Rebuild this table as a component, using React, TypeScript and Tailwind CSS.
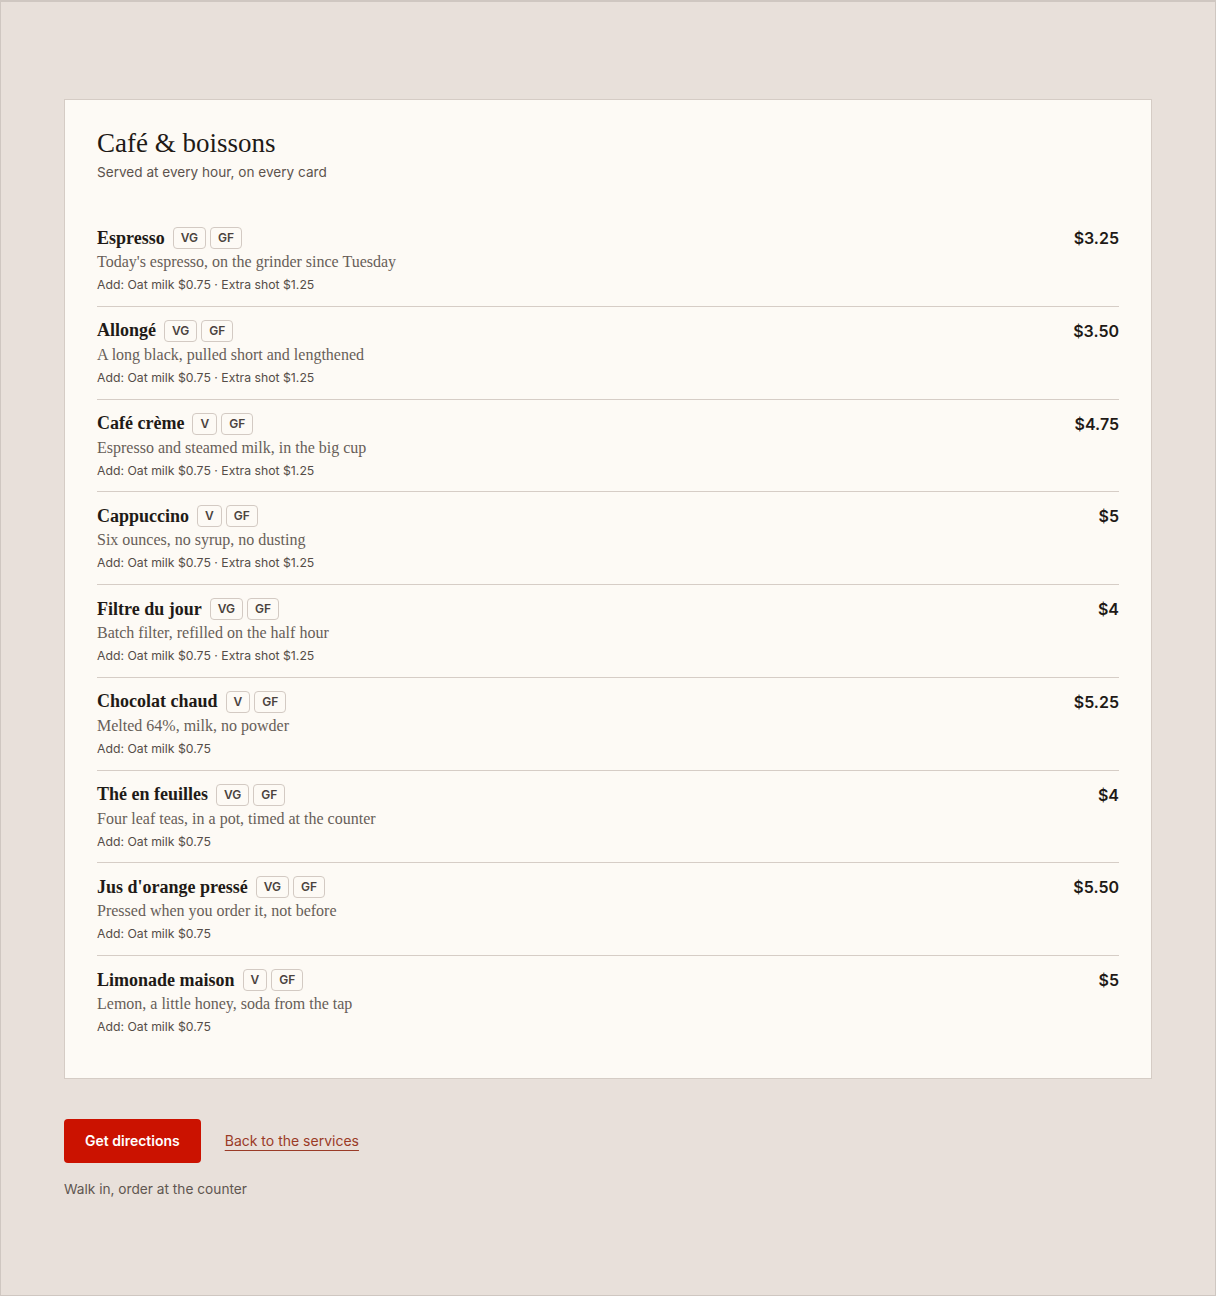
import React from "react";

type Item = {
    name: string;
    tags: string[];
    desc: string;
    add: string;
    price: string;
};

const SHOT = "Add: Oat milk $0.75 · Extra shot $1.25";
const MILK = "Add: Oat milk $0.75";

const items: Item[] = [
    { name: "Espresso", tags: ["VG", "GF"], desc: "Today's espresso, on the grinder since Tuesday", add: SHOT, price: "$3.25" },
    { name: "Allongé", tags: ["VG", "GF"], desc: "A long black, pulled short and lengthened", add: SHOT, price: "$3.50" },
    { name: "Café crème", tags: ["V", "GF"], desc: "Espresso and steamed milk, in the big cup", add: SHOT, price: "$4.75" },
    { name: "Cappuccino", tags: ["V", "GF"], desc: "Six ounces, no syrup, no dusting", add: SHOT, price: "$5" },
    { name: "Filtre du jour", tags: ["VG", "GF"], desc: "Batch filter, refilled on the half hour", add: SHOT, price: "$4" },
    { name: "Chocolat chaud", tags: ["V", "GF"], desc: "Melted 64%, milk, no powder", add: MILK, price: "$5.25" },
    { name: "Thé en feuilles", tags: ["VG", "GF"], desc: "Four leaf teas, in a pot, timed at the counter", add: MILK, price: "$4" },
    { name: "Jus d'orange pressé", tags: ["VG", "GF"], desc: "Pressed when you order it, not before", add: MILK, price: "$5.50" },
    { name: "Limonade maison", tags: ["V", "GF"], desc: "Lemon, a little honey, soda from the tap", add: MILK, price: "$5" },
];

const serif = "font-['Liberation_Serif',_'Times_New_Roman',_serif]";
const sans = "font-['Inter',_'Liberation_Sans',_sans-serif]";

export default function App() {
    return (
        <main className={`min-h-[1296px] bg-[#e8e0da] border border-t-2 border-[#cfc7c1] px-[63px] pt-[97px] pb-16 ${sans}`}>
            {/* Menu card */}
            <section className="bg-[#fdfaf5] border border-[#d5ccc5] px-8 pt-8 pb-[30px]">
                <header className="mb-8">
                    <h1 className={`${serif} text-[27px] leading-[22px] mb-2 text-[#1f1a17]`}>Café &amp; boissons</h1>
                    <p className="text-[13.6px] leading-5 text-[#5c534d]">Served at every hour, on every card</p>
                </header>

                <ul className="divide-y divide-[#d6cdc6]">
                    {items.map((item) => (
                        <li key={item.name} className="py-3 flex items-start justify-between">
                            <div>
                                <div className="h-6 flex items-center">
                                    <span className={`${serif} font-bold text-[18px] text-[#1f1a17]`}>{item.name}</span>
                                    <span className="ml-2 flex gap-1">
                                        {item.tags.map((t) => (
                                            <span key={t} className="h-[22px] px-[7px] flex items-center border border-[#d3cac3] rounded-[4px] text-xs font-semibold text-[#4b433e]">
                                                {t}
                                            </span>
                                        ))}
                                    </span>
                                </div>
                                <p className={`${serif} text-[16px] leading-6 text-[#675e58]`}>{item.desc}</p>
                                <p className="mt-0.5 text-[12.25px] leading-[17.75px] text-[#554d48]">{item.add}</p>
                            </div>
                            <span className="h-6 flex items-center text-base font-semibold text-[#1f1a17]">{item.price}</span>
                        </li>
                    ))}
                </ul>
            </section>

            {/* Actions */}
            <div className="mt-10 flex items-center gap-6">
                <button className="h-11 px-[21px] rounded-[4px] bg-[#cb1200] text-white text-sm font-semibold">
                    Get directions
                </button>
                <a href="#" className="text-sm text-[#9a3b27] underline underline-offset-4 decoration-1">
                    Back to the services
                </a>
            </div>
            <p className="mt-4 text-[13.7px] leading-5 text-[#5f5650]">Walk in, order at the counter</p>
        </main>
    );
}
